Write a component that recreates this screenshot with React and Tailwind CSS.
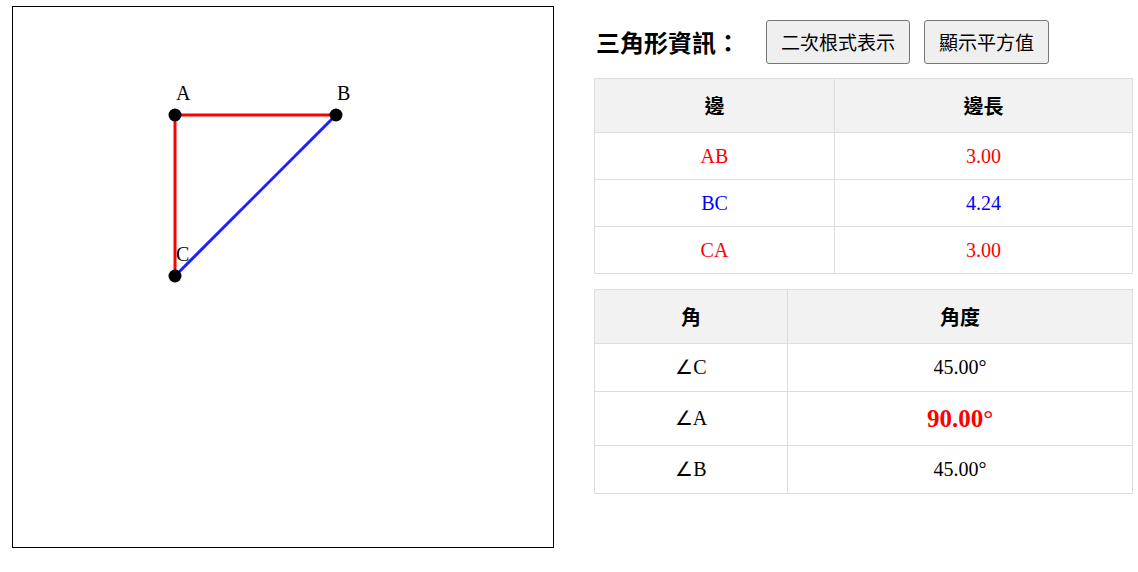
import React from "react";

const pts = {
  A: { x: 162, y: 108 },
  B: { x: 323, y: 108 },
  C: { x: 162, y: 269 },
};

const sides = [
  { name: "AB", len: "3.00", color: "text-[#ff0000]" },
  { name: "BC", len: "4.24", color: "text-[#0000ff]" },
  { name: "CA", len: "3.00", color: "text-[#ff0000]" },
];

const angles = [
  { name: "∠C", deg: "45.00°", right: false },
  { name: "∠A", deg: "90.00°", right: true },
  { name: "∠B", deg: "45.00°", right: false },
];

function Canvas() {
  const { A, B, C } = pts;
  return (
    <div className="w-[542px] h-[542px] border border-black shrink-0 bg-white">
      <svg width="540" height="540" viewBox="0 0 540 540">
        <line x1={A.x} y1={A.y} x2={B.x} y2={B.y} stroke="#ff0000" strokeWidth="3" />
        <line x1={B.x} y1={B.y} x2={C.x} y2={C.y} stroke="#1f1fff" strokeWidth="3" />
        <line x1={C.x} y1={C.y} x2={A.x} y2={A.y} stroke="#ff0000" strokeWidth="3" />
        {Object.entries(pts).map(([k, p]) => (
          <g key={k}>
            <circle cx={p.x} cy={p.y} r="6.5" fill="#000" />
            <text
              x={p.x + 1}
              y={p.y - 15}
              fontSize="20"
              fontFamily="'Liberation Serif', serif"
              fill="#000"
            >
              {k}
            </text>
          </g>
        ))}
      </svg>
    </div>
  );
}

const th = "border border-[#dddddd] bg-[#f2f2f2] px-3 py-3 text-[20px] font-bold leading-[29px] text-center";
const td = "border border-[#dddddd] px-3 py-3 text-[20px] text-center font-['Liberation_Serif',serif]";

export default function App() {
  return (
    <div className="flex pl-[12px] pt-[6px] bg-white min-h-[572px] font-['Noto_Sans_CJK_TC',sans-serif] text-black">
      <Canvas />
      <div className="ml-[40px] w-[539px] pt-[14px]">
        <div className="flex items-center h-[44px]">
          <h2 className="text-[24px] font-bold ml-[2px] mr-[26px] leading-none">三角形資訊：</h2>
          <button className="h-[44px] px-[14px] text-[19px] bg-[#efefef] border border-[#767676] rounded-[3px]">
            二次根式表示
          </button>
          <button className="h-[44px] px-[14px] ml-[14px] text-[19px] bg-[#efefef] border border-[#767676] rounded-[3px]">
            顯示平方值
          </button>
        </div>

        <table className="w-full border-collapse mt-[14px]">
          <thead>
            <tr>
              <th className={`${th} w-[240px]`}>邊</th>
              <th className={th}>邊長</th>
            </tr>
          </thead>
          <tbody>
            {sides.map((s) => (
              <tr key={s.name}>
                <td className={`${td} leading-[22px] ${s.color}`}>{s.name}</td>
                <td className={`${td} leading-[22px] ${s.color}`}>{s.len}</td>
              </tr>
            ))}
          </tbody>
        </table>

        <table className="w-full border-collapse mt-[15px]">
          <thead>
            <tr>
              <th className={`${th} w-[193px]`}>角</th>
              <th className={th}>角度</th>
            </tr>
          </thead>
          <tbody>
            {angles.map((a) => (
              <tr key={a.name}>
                <td className={`${td} leading-[23px]`}>{a.name}</td>
                <td className={`${td} leading-[23px]`}>
                  {a.right ? (
                    <span className="text-[#ff0000] font-bold text-[25px] leading-[29px]">{a.deg}</span>
                  ) : (
                    a.deg
                  )}
                </td>
              </tr>
            ))}
          </tbody>
        </table>
      </div>
    </div>
  );
}
